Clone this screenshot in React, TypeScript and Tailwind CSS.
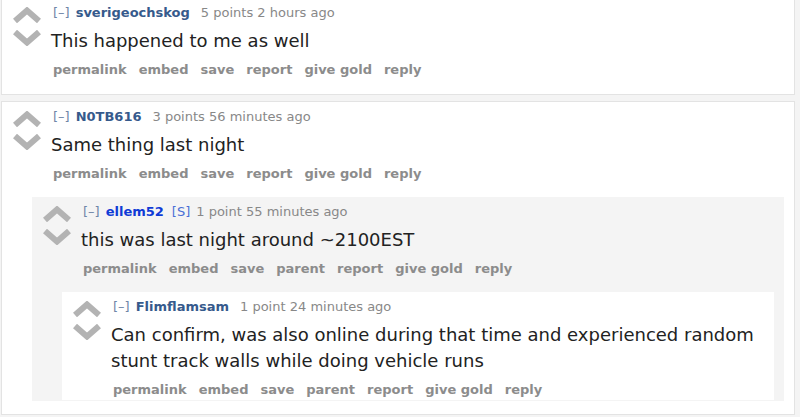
import React from "react";

type C = {
  user: string;
  submitter?: boolean;
  points: string;
  time: string;
  body: string;
  parent?: boolean;
  bg: "white" | "gray";
  children?: C[];
};

const font = { fontFamily: '"DejaVu Sans", Verdana, sans-serif' };

function Arrows() {
  return (
    <div className="flex w-[28px] shrink-0 flex-col items-center pt-[3px]">
      <svg width="28" height="16" viewBox="0 0 28 16">
        <polyline points="2,14 14,3.5 26,14" fill="none" stroke="#b3b3b3" strokeWidth="6" strokeLinejoin="miter" />
      </svg>
      <svg width="28" height="16" viewBox="0 0 28 16" className="mt-[7px]">
        <polyline points="2,2 14,12.5 26,2" fill="none" stroke="#b3b3b3" strokeWidth="6" strokeLinejoin="miter" />
      </svg>
    </div>
  );
}

function Comment({ c }: { c: C }) {
  const buttons = ["permalink", "embed", "save", ...(c.parent ? ["parent"] : []), "report", "give gold", "reply"];
  return (
    <div className={`${c.bg === "gray" ? "bg-[#f4f4f4]" : "bg-white"} pl-[11px] pr-[10px] pt-[6px] pb-[1px]`}>
      <div className="flex">
        <Arrows />
        <div className="ml-[10px] min-w-0 flex-1">
          <div className="flex h-[18px] items-center whitespace-nowrap text-[13px] leading-[18px]">
            <span className="ml-[2px] text-[#6f86a8]">[–]</span>
            <span className={`ml-[6px] font-bold ${c.submitter ? "text-[#0f3bd6]" : "text-[#365a8c]"}`}>{c.user}</span>
            {c.submitter && <span className="ml-[8px] text-[#4a6fd6]">[S]</span>}
            <span className={`${c.submitter ? "ml-[6px]" : "ml-[11px]"} text-[#888888]`}>
              {c.points} {c.time}
            </span>
          </div>
          <div className="mt-[6px] text-[18px] leading-[26px] text-[#222222]">{c.body}</div>
          <div className="mt-[7px] flex h-[18px] items-center gap-[12px] pl-[2px] text-[13px] font-bold leading-[18px] text-[#8c8c8c]">
            {buttons.map((b) => (
              <span key={b}>{b}</span>
            ))}
          </div>
        </div>
      </div>
      {c.children && c.children.length > 0 && (
        <div className="ml-[19px] mt-[14px]">
          {c.children.map((ch, i) => (
            <Comment key={i} c={ch} />
          ))}
        </div>
      )}
    </div>
  );
}

const data: C[] = [
  {
    user: "sverigeochskog",
    points: "5 points",
    time: "2 hours ago",
    body: "This happened to me as well",
    bg: "white",
  },
  {
    user: "N0TB616",
    points: "3 points",
    time: "56 minutes ago",
    body: "Same thing last night",
    bg: "white",
    children: [
      {
        user: "ellem52",
        submitter: true,
        points: "1 point",
        time: "55 minutes ago",
        body: "this was last night around ~2100EST",
        parent: true,
        bg: "gray",
        children: [
          {
            user: "Flimflamsam",
            points: "1 point",
            time: "24 minutes ago",
            body: "Can confirm, was also online during that time and experienced random stunt track walls while doing vehicle runs",
            parent: true,
            bg: "white",
          },
        ],
      },
    ],
  },
];

export default function App() {
  return (
    <div className="h-[417px] w-[800px] overflow-hidden bg-[#f4f4f4]" style={font}>
      <div className="-mt-[3px] flex flex-col gap-[6px] pl-[1px]">
        {data.map((c, i) => (
          <div key={i} className={`w-[794px] border border-[#e3e3e3] bg-white ${i === 0 ? "pb-[14px]" : "pb-[12px]"}`}>
            <Comment c={c} />
          </div>
        ))}
      </div>
    </div>
  );
}
